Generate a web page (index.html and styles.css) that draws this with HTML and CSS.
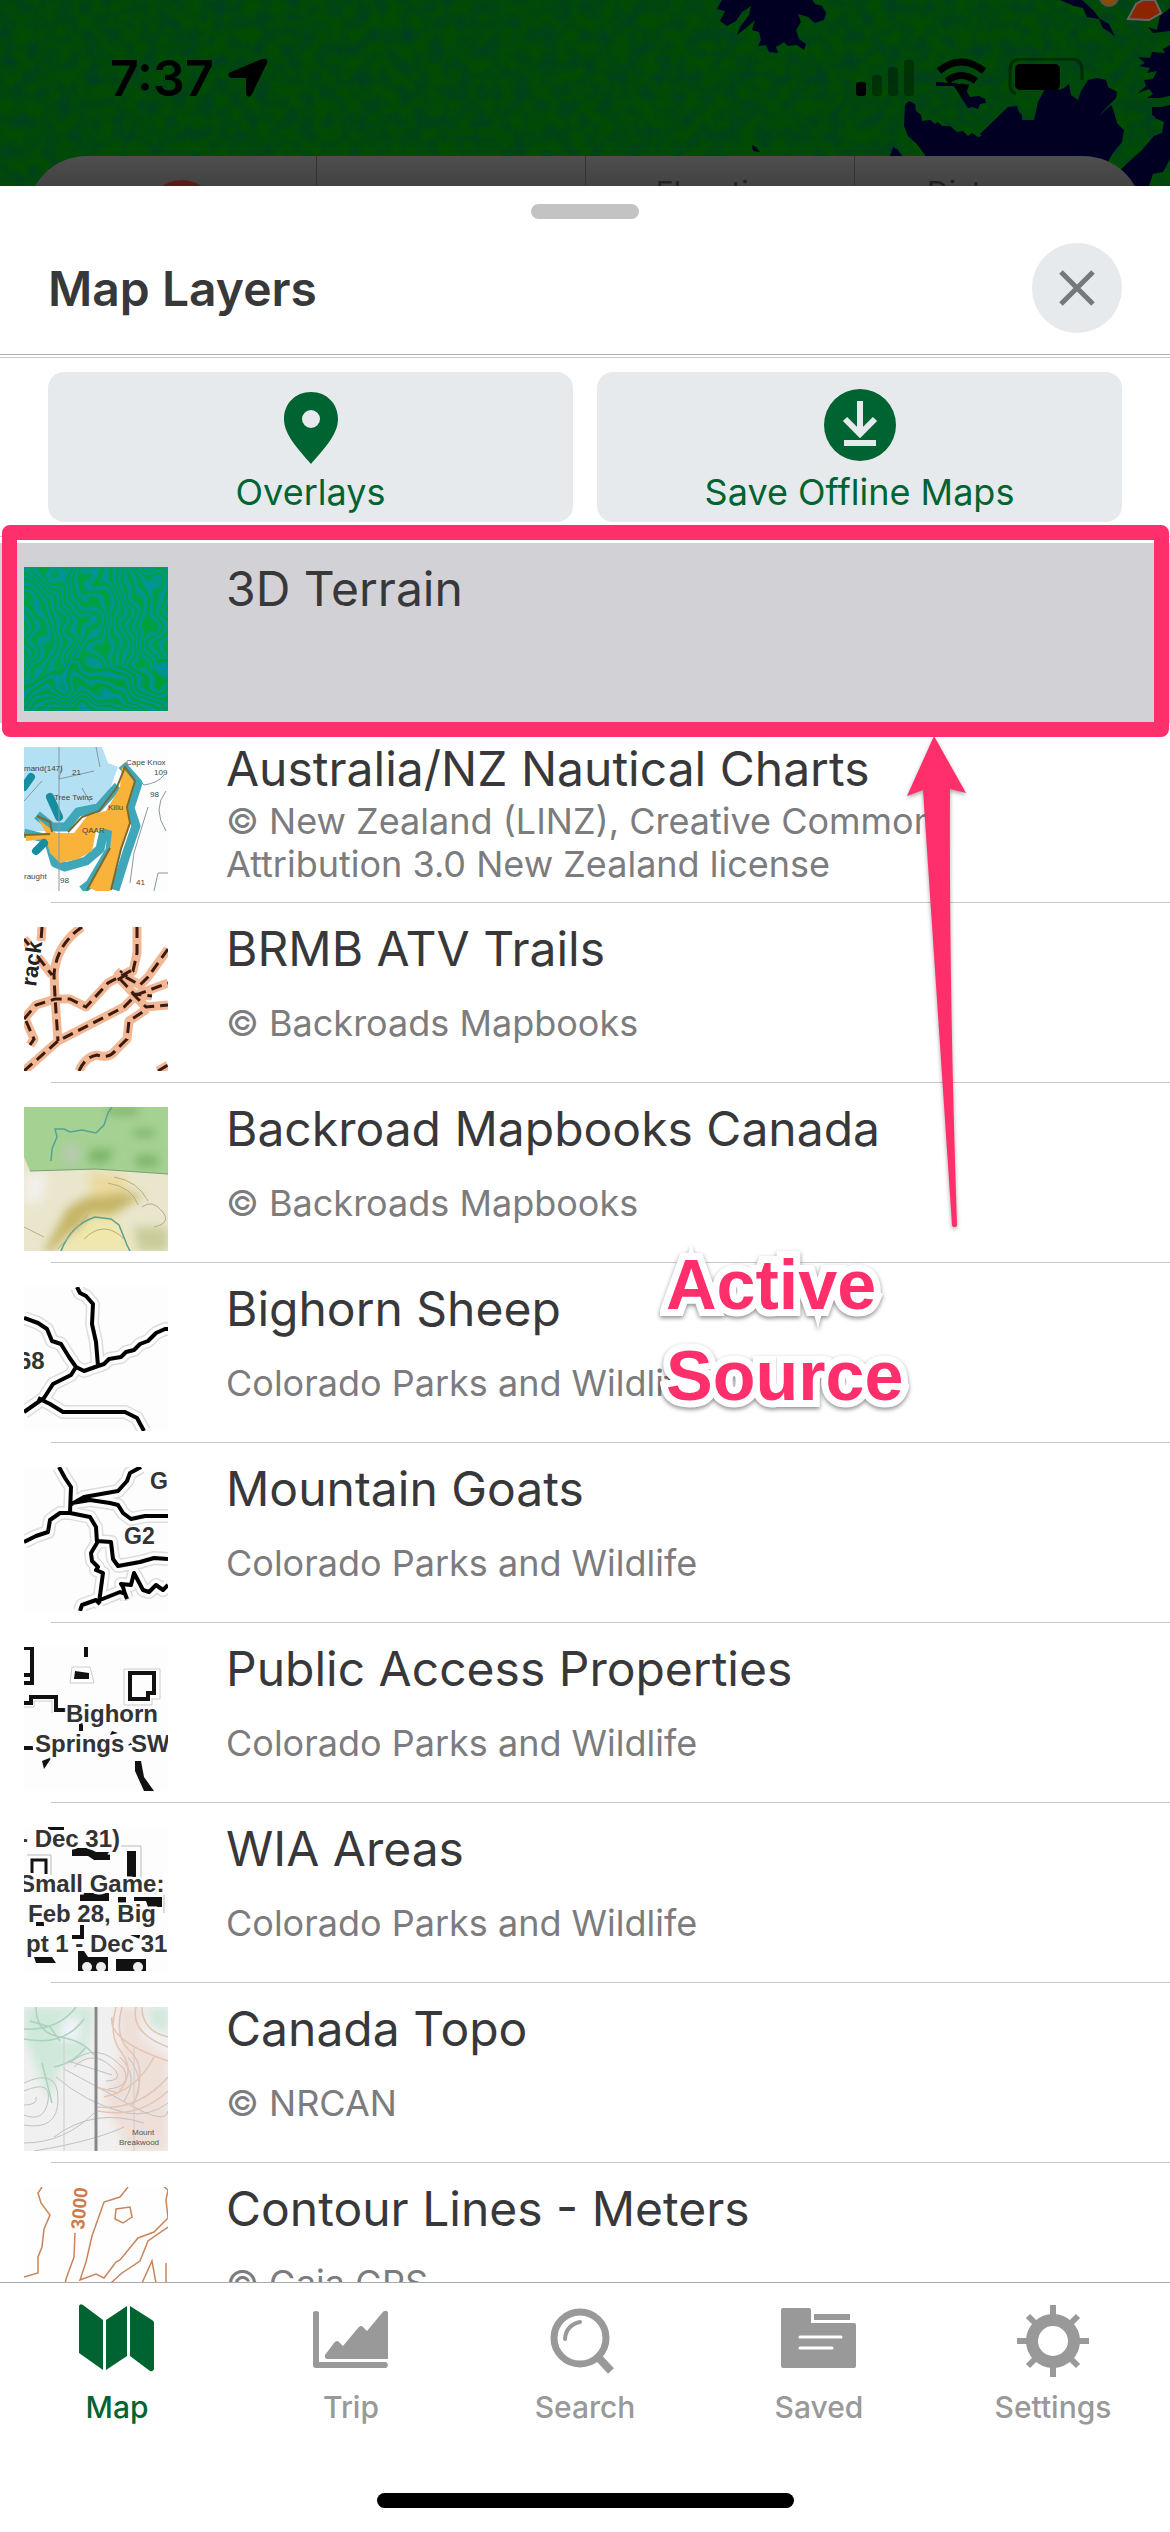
FILE: index.html
```html
<!DOCTYPE html>
<html lang="en">
<head>
    <meta charset="UTF-8">
    <meta name="viewport" content="width=device-width, initial-scale=1.0">
    <title>Map Layers</title>
    <link rel="stylesheet" href="styles.css">
</head>
<body>
    <div class="app">
        <div class="backdrop">
            <svg class="backdrop-map" viewBox="0 0 1170 186" preserveAspectRatio="xMaxYMin slice" aria-hidden="true">
                <filter id="grain" x="0" y="0" width="100%" height="100%" color-interpolation-filters="sRGB">
                    <feTurbulence type="fractalNoise" baseFrequency="0.07" numOctaves="3" seed="4"/>
                    <feColorMatrix values="0 0 0 0 0  0 0 0 0 0.24  0 0 0 0 0.14  0 1.6 0 0 -0.5"/>
                </filter>
                <rect width="1170" height="186" fill="#004c02"/>
                <rect width="1170" height="186" filter="url(#grain)"/>
                <g fill="#020022">
                    <path d="M722 0l-5 9 8 2-5 10 7 5 9-5 6-9 9-6-2 9-9 12-3 8 9-7 9-8-3 10 7 2 2 8-3 6 8-1 3 7 9 1-2-6 8-5 4 4 9-1 7 5 2-6-7-5-3-9 5-8-3-8 10 3 7 6 9-3 2-7-4-7-7-2-5-7 2-4-5-3z"/>
                    <path d="M1060 0l14 6 9 2 4 9 12 2 4 9 8 5 4 4-6-13-9-5-7-9-11-10z"/>
                    <path d="M1170 45l-7 4 2 4-13-1-2 6-12-1 7 6-6 3 11 2-3 5 10-2-4 8-9 1 2 6-8 7 11-4 4 5-6 4 12 0 11-2z"/>
                    <path d="M1170 8l-10 8-3 14-9-3 5 6 17-2zM1152 107l10 0 8-2v21l-9-7-9-4z"/>
                    <path d="M936 82l20 1 6 3 7-2-2 8 3 5 9-1 6 3 1 4-6 1-2 5-5-2-5 1-6-9-8-13-18 0z"/>
                    <path d="M905 105l4-4 6 3 1 7 5 4 1 6 8-1 5 4 3-2 4 4 8 0 7 6 6-1 5 5 4-3 6 4 7-2 8 4 8 1 13 0 11 2v6l10 4v13l-96 0-12-7-10-14-9-8-4-10z"/>
                    <path d="M1008 107l9-1 2 6 3 3 0 5 12 0 4-18 6-11 3-8 7 1 5 6 5-2 5-4 2 11 7 5 3-9 7-11 9-2 9 2 2 7 9 5-1 6-9 9-9 10 13-12 2 4 4 14 7 7-2 12-9 11-7 12-9 9-64 0 0-18-5-4h-15l-10-6-4 4-12-4-2-7-5-5z"/>
                    <path d="M1170 107l-17 4 2 7 9 4-2 11-8 3-12 14-9 8-17 16 7 12h26l4-12 10-2 7-13zM890 156l3-9 5 3 4 6zM752 145l4 2 4 5-7-1z"/>
                </g>
                <circle cx="1109" cy="-3" r="9" fill="#8a4a00" stroke="#555" stroke-width="2"/>
                <path d="M1128 19l8-15 7-4h12l6 13-12 7z" fill="#8a2500" stroke="#666" stroke-width="2"/>
            </svg>
            <div class="status-bar">
                <span class="time">7:37
                    <svg width="40" height="40" viewBox="0 0 40 40" aria-hidden="true"><path d="M37 1q3 0 2 4L24 36q-2 4-5 2-1-1-1-3V20H4q-5-1-3-5l2-1L34 1z"/></svg>
                </span>
                <svg class="status-icons" width="232" height="40" viewBox="0 0 232 40" aria-hidden="true">
                    <rect y="24" width="10" height="14" rx="3"/>
                    <g opacity=".3"><rect x="16" y="17" width="10" height="21" rx="3"/><rect x="32" y="9" width="10" height="29" rx="3"/><rect x="48" y="2" width="10" height="36" rx="3"/></g>
                    <g fill="none" stroke="#000" stroke-width="7"><path d="M83 13q22-18 45 0M91 23q14-11 29 0"/></g>
                    <path d="M98 28q8-5 15 0l-8 9z"/>
                    <path d="M160 36q-6-2-6-9V12q0-11 11-11h50q11 0 11 11v10" fill="none" stroke="#002d06" stroke-width="3"/>
                    <rect x="159" y="6" width="45" height="26" rx="5"/>
                </svg>
            </div>
            <div class="stats">
                <div class="stat"><span class="record"></span></div>
                <div class="stat"></div>
                <div class="stat">Elevation</div>
                <div class="stat">Distance</div>
            </div>
        </div>

        <main class="sheet">
            <header class="sheet-header">
                <div class="handle"></div>
                <div class="title-row">
                    <h1>Map Layers</h1>
                    <button class="close" type="button" aria-label="Close">
                        <svg width="36" height="36" viewBox="0 0 36 36"><path d="M2 2l32 32M34 2L2 34" stroke="#77787a" stroke-width="5"/></svg>
                    </button>
                </div>
            </header>

            <div class="sheet-body">
                <div class="actions">
                    <button class="action" type="button">
                        <svg width="72" height="72" viewBox="0 0 72 72"><path fill-rule="evenodd" d="M36 3C20 3 9 15 9 30c0 16 15 31 27 45 12-14 27-29 27-45C63 15 52 3 36 3zm0 18a9 9 0 1 1 0 18 9 9 0 0 1 0-18z"/></svg>
                        Overlays
                    </button>
                    <button class="action" type="button">
                        <svg width="72" height="72" viewBox="0 0 72 72"><circle cx="36" cy="36" r="36"/><path d="M36 12v32M21 30l15 15 15-15M20 54h32" fill="none" stroke="#e7eaec" stroke-width="6"/></svg>
                        Save Offline Maps
                    </button>
                </div>

                <ul class="layers">
                    <li class="layer selected">
                        <svg class="thumb" viewBox="0 0 144 144" aria-hidden="true">
                            <defs>
                                <radialGradient id="wave1" gradientUnits="userSpaceOnUse" cx="60" cy="190" r="8" spreadMethod="repeat">
                                    <stop offset="0" stop-color="#00a01c"/><stop offset=".5" stop-color="#008fb4"/><stop offset="1" stop-color="#00a01c"/>
                                </radialGradient>
                                <radialGradient id="wave2" gradientUnits="userSpaceOnUse" cx="-40" cy="70" r="8" spreadMethod="repeat">
                                    <stop offset="0" stop-color="#00a428"/><stop offset=".5" stop-color="#0092b0"/><stop offset="1" stop-color="#00a428"/>
                                </radialGradient>
                                <filter id="warp" x="0" y="0" width="100%" height="100%" color-interpolation-filters="sRGB">
                                    <feTurbulence type="fractalNoise" baseFrequency="0.03" numOctaves="2" seed="8" result="n"/>
                                    <feDisplacementMap in="SourceGraphic" in2="n" scale="50" xChannelSelector="R" yChannelSelector="G"/>
                                </filter>
                            </defs>
                            <rect width="144" height="144" fill="#009868"/>
                            <g filter="url(#warp)" opacity=".85">
                                <rect x="-40" y="-40" width="224" height="224" fill="url(#wave2)"/>
                                <path d="M-40 130Q60 85 184 100v90H-40z" fill="url(#wave1)"/>
                            </g>
                        </svg>
                        <div class="info"><h2>3D Terrain</h2></div>
                    </li>
                    <li class="layer">
                        <svg class="thumb" viewBox="0 0 144 144" aria-hidden="true">
                            <rect width="144" height="144" fill="#fdfdfe"/>
                            <path d="M0 0h78l6 16 10 4-8 22-24 24-38 18L0 84z" fill="#b3e0f2"/>
                            <g fill="none" stroke="#3fa7ba" stroke-width="9" stroke-linejoin="round">
                                <path d="M0 86l24 6 7 24 10 4 21-6 14-12 4-18 8 1-2 18-20 34-8 6M98 18l16 18-8 25 6 18-9 26-12 38M13 68l15 12 14 0 12-15 20-4 20-22"/>
                            </g>
                            <path d="M98 20l12 14-6 26 2 18-10 26-10 40H72l-8-4 22-38 2-18-6-2-10 2-4 20-14 8-18 4-10-10-4-14-20 2V88l20-2-8-14 18 14h18l14-18 18-4 14-24z" fill="#f9b23a"/>
                            <path d="M0 88l26-1M13 69l13 6 2 10M44 85l14-15 17-6 18-24 8-20 10 14-8 26 3 16-9 26-10 41M63 143l23-42" fill="none" stroke="#7a6a2e" stroke-width="2"/>
                            <path d="M26 50l9 20M7 30l-7 10M20 96l-8 8M3 50" stroke="#168e9f" stroke-width="8" stroke-linecap="round"/>
                            <path d="M35 0v144M72 0l4 20M38 18l-3 14 35-8M66 55l-8-14M112 30l8 8q14-2 20-10M142 44q-14 18 0 40M124 60l-8 26-6 20-4 30M130 144l4-18h10M0 54l18-20" fill="none" stroke="#8698a4" stroke-width="1"/>
                            <g font-family="Liberation Sans" font-size="8" fill="#444"><text x="102" y="18">Cape Knox</text><text x="30" y="53">Tree Twins</text><text x="58" y="86">QAAR</text><text x="84" y="63">Kiliu</text><text x="48" y="28">21</text><text x="0" y="24">mand(147)</text><text x="130" y="28">109</text><text x="126" y="50">98</text><text x="36" y="136">98</text><text x="0" y="132">raught</text><text x="112" y="138">41</text></g>
                        </svg>
                        <div class="info"><h2>Australia/NZ Nautical Charts</h2><p>© New Zealand (LINZ), Creative Common<br>Attribution 3.0 New Zealand license</p></div>
                    </li>
                    <li class="layer">
                        <svg class="thumb" viewBox="0 0 144 144" aria-hidden="true">
                            <rect width="144" height="144" fill="#fff"/>
                            <g fill="none" stroke="#f2b795" stroke-width="9" stroke-linejoin="round">
                                <path id="trails" d="M58 0Q32 18 30 48l1 22 3 44M18 0l-1 14M14 30l14 18M0 12l5 6M0 92l12-14 19-6 15 0 16 8 22-24 26-14M113 0v26l-4 18-14 8-1-4 4-4M144 22l-20 28-8 8-18-10M0 144l34-30 66-34 12-12 32-12M108 66l14 14 22-2M96 52l14 15 18 2M55 144q6-14 18-16 12 4 18-4l12-12 2-18 18-12M2 94l8 18-4 6M134 144l10-6"/>
                            </g>
                            <use href="#trails" fill="none" stroke="#3b1a10" stroke-width="3" stroke-dasharray="11 6"/>
                            <text transform="translate(12 60) rotate(-82)" font-family="Liberation Sans" font-size="22" font-weight="bold" fill="#222">rack</text>
                        </svg>
                        <div class="info"><h2>BRMB ATV Trails</h2><p>© Backroads Mapbooks</p></div>
                    </li>
                    <li class="layer">
                        <svg class="thumb" viewBox="0 0 144 144" aria-hidden="true">
                            <filter id="soft"><feGaussianBlur stdDeviation="5"/></filter>
                            <rect width="144" height="144" fill="#e9e6cd"/>
                            <g filter="url(#soft)">
                                <path d="M20 144l24-44 30-16 46 4-34 22-40 16-20 20z" fill="#c6b668"/>
                                <path d="M64 66l34 2 10 16-40 6z" fill="#ebda9e"/>
                                <path d="M36 144l30-36h24l20 36z" fill="#efe7ac"/>
                                <path d="M110 120h34v24h-30z" fill="#c9cc9a"/>
                                <path d="M0 66h24l-6 30H0z" fill="#f1f0ea"/>
                            </g>
                            <path d="M0 0h144v67L72 62 6 64 0 50z" fill="#a5d193"/>
                            <g filter="url(#soft)"><path d="M66 42h24l-6 14H64zM110 22h20v8h-20zM84 0h30v8H84zM112 48h22v12h-22z" fill="#7db56b"/><path d="M40 38h14v18H40z" fill="#b9c9b4"/></g>
                            <path d="M6 64l66-2 72 5" fill="none" stroke="#7f9c73"/>
                            <path d="M27 54l1-12 5-12-2-8 9 0 6 3 12-2 14 3 8-8 4-12 4-6M37 144q10-26 34-34l16 2 8 6 8 20 3 6" fill="none" stroke="#55a394" stroke-width="1.5"/>
                            <path d="M34 142l30-34M90 70q24 4 34 24M84 76q24 4 30 22M118 100q10-8 20 4t-8 16M100 132q-20-20-40 0M0 120l20 10" fill="none" stroke="#b7ae86" stroke-width="1"/>
                        </svg>
                        <div class="info"><h2>Backroad Mapbooks Canada</h2><p>© Backroads Mapbooks</p></div>
                    </li>
                    <li class="layer">
                        <svg class="thumb" viewBox="0 0 144 144" aria-hidden="true">
                            <rect width="144" height="144" fill="#fdfdfd"/>
                            <g fill="none" stroke-linejoin="round">
                                <path id="sheep" d="M0 31l14 5 9 6 5 12 9 3 8 13 7 10-5 8-18 9-9 14-20 14M53 0l3 6 6 3 7 8-1 20 4 18 2 24-14 5-8-4M74 79l6-2 5-5 12-2 5-5 8-2 6-6 8-3 8-8 9-4h9M14 111l12 6 13 8h62l12 6 7 13"/>
                                <use href="#sheep" stroke="#ddd" stroke-width="14"/>
                                <use href="#sheep" stroke="#fdfdfd" stroke-width="11"/>
                                <use href="#sheep" stroke="#000" stroke-width="4"/>
                            </g>
                            <text x="-6" y="82" font-family="Liberation Sans" font-size="24" font-weight="bold" fill="#333">68</text>
                        </svg>
                        <div class="info"><h2>Bighorn Sheep</h2><p>Colorado Parks and Wildlife</p></div>
                    </li>
                    <li class="layer">
                        <svg class="thumb" viewBox="0 0 144 144" aria-hidden="true">
                            <rect width="144" height="144" fill="#fdfdfd"/>
                            <g fill="none" stroke-linejoin="round">
                                <path id="goats" d="M35 0l6 11 6 9-1 26-10 0-10 7-2 12-12 4-12 6M46 38l14-8 34-6 9-10 3-8 11-6M48 36l18-3 20 3 8 2 5 8 8 6 14-3h23M46 46l20 4 6 10 1 16-6 10 1 8 6 6-2 3 7 3-4 30M73 74l14 1 2 17 5 7 22-4 14-4 14 1M76 133l20-8 5 2-2-7-2-3 10 1 3-12 9 17 6 2 7-7 7 5 5-5M56 144l2-6 14-5 4 4M103 132l-3-8"/>
                                <use href="#goats" stroke="#ddd" stroke-width="14"/>
                                <use href="#goats" stroke="#fdfdfd" stroke-width="11"/>
                                <use href="#goats" stroke="#000" stroke-width="4"/>
                            </g>
                            <g font-family="Liberation Sans" font-size="23" font-weight="bold" fill="#333"><text x="100" y="77">G2</text><text x="126" y="22">G</text></g>
                        </svg>
                        <div class="info"><h2>Mountain Goats</h2><p>Colorado Parks and Wildlife</p></div>
                    </li>
                    <li class="layer">
                        <svg class="thumb" viewBox="0 0 144 144" aria-hidden="true">
                            <rect width="144" height="144" fill="#fdfdfd"/>
                            <g fill="none" stroke="#111" stroke-width="4">
                                <path d="M0 1h8v35H0M0 28h8M0 56h7v-6h25v13h10M0 101h9M106 26h24v20h-6v6h-18zM62 0v10M57 76v8"/>
                            </g>
                            <path d="M51 24l14 2 0 6H50zM18 114l10-4-8 12zM88 84l6 2-8 2zM111 114l6 0 3 16 10 14h-10l-9-20zM104 98l5-4v8z" fill="#111"/>
                            <path d="M100 22h36v30h-8v6h-28zM48 20h18l4 16H46zM0 60h10v-6h18v12" fill="none" stroke="#ccc"/>
                            <g class="map-label"><text x="42" y="75">Bighorn</text><text x="11" y="105">Springs SW</text></g>
                        </svg>
                        <div class="info"><h2>Public Access Properties</h2><p>Colorado Parks and Wildlife</p></div>
                    </li>
                    <li class="layer">
                        <svg class="thumb" viewBox="0 0 144 144" aria-hidden="true">
                            <rect width="144" height="144" fill="#fdfdfd"/>
                            <path d="M24 0h16v3H24zM48 21h16l8 4h14v8H70l-6-4H48zM103 24h9v26h-9zM56 66h29v8H56zM94 70h8v6h-8zM110 70h28v10h-14l-2-6h-12zM12 95h8v4h-8zM48 108h8v-10h4v14H48zM10 130h18l4 6H12zM54 124h6l4 6h20v16H54zM92 132h30v14H92zM106 108h10v4z" fill="#111"/>
                            <path d="M8 46V33h14v14" fill="none" stroke="#111" stroke-width="3"/>
                            <circle cx="63" cy="140" r="5" fill="#eee"/><circle cx="77" cy="140" r="5" fill="#eee"/><circle cx="114" cy="140" r="5" fill="#eee"/>
                            <path d="M97 19h20v36h-8M44 17h8M3 28h24v20M88 66h52v20M44 114h-4v-8" fill="none" stroke="#bbb"/>
                            <g class="map-label"><text x="-4" y="20">- Dec 31)</text><text x="-5" y="65">Small Game:</text><text x="4" y="95">Feb 28, Big</text><text x="2" y="125">pt 1 - Dec 31</text></g>
                        </svg>
                        <div class="info"><h2>WIA Areas</h2><p>Colorado Parks and Wildlife</p></div>
                    </li>
                    <li class="layer">
                        <svg class="thumb" viewBox="0 0 144 144" aria-hidden="true">
                            <rect width="144" height="144" fill="#f1f0f0"/>
                            <g filter="url(#soft)">
                                <path d="M0 0h70l-4 30-6 20-24 8-10 36-14-34L0 30zM124 0h20v26l-16-6z" fill="#cfe8da"/>
                                <path d="M94 0h26l-4 30 28 20v94h-40l-24-50 16-44z" fill="#eedfd8"/>
                                <path d="M40 10h16v24H34z" fill="#f2f2fa"/>
                            </g>
                            <g fill="none" stroke="#a9d3bd" stroke-width="1.5"><path d="M0 22q34 2 52-22M0 32q40 8 60-20M12 0q0 26 24 30t34 18M30 60q20-4 32-20M6 14l20 6 10 14M18 56l10 40"/></g>
                            <g fill="none" stroke="#c3c0c1" stroke-width="1">
                                <path d="M0 108q20 8 24-14T0 84M0 118q34 6 34-26T0 76M0 98q14 0 12-8M40 62q30 16 66 36t38 6M44 54q38 12 44 14M32 70q30 26 70 36 24 4 42-10M50 60q20-20 42 4 6 10-10 10M46 56q28-24 54 6 8 18-16 20M30 130q40-30 90-14M0 136q40 0 70-30M10 144q60-10 90-24M96 50q20 20 4 44M104 50q20 26 4 48"/>
                            </g>
                            <g fill="none" stroke="#e3c4b5" stroke-width="1.5"><path d="M92 0q-8 30 6 46 14 20-4 40l-22-6M98 0q-8 30 8 44t6 46M112 0q-6 26 32 40M118 0q0 24 26 30M88 10q-4 24 56 44M130 50q-18 34-50 40M144 70q-30 34-70 30M144 84q-30 28-70 20"/></g>
                            <path d="M72 0v144" stroke="#888" stroke-width="3"/><path d="M110 40v104M40 30v114" stroke="#ccc"/>
                            <g font-family="Liberation Sans" font-size="8" fill="#555"><text x="108" y="128">Mount</text><text x="95" y="138">Breakwood</text></g>
                        </svg>
                        <div class="info"><h2>Canada Topo</h2><p>© NRCAN</p></div>
                    </li>
                    <li class="layer">
                        <svg class="thumb" viewBox="0 0 144 144" aria-hidden="true">
                            <rect width="144" height="144" fill="#fefefe"/>
                            <g fill="none" stroke="#c9845c" stroke-width="1.5">
                                <path d="M18 0l-4 6 3 10 9 12-6 14-2 18-4 10v16l-14 4M51 46l-1 24-8 22-10 52M104 0l-8 10-16 5-12 34-6 26-6 18 16-6 8 4 12-16 4-2 18-22 16-6 14-14-2-18 2-10-6-5M92 22l14-2 2 10-9 6-8-4zM144 40l-20 14-8 20-18 12-20 18M118 96l10-22 4 22M142 76v20"/>
                            </g>
                            <text transform="translate(60 43) rotate(-85)" font-family="Liberation Sans" font-size="19" font-weight="bold" fill="#cf7a4c">3000</text>
                        </svg>
                        <div class="info"><h2>Contour Lines - Meters</h2><p>© Gaia GPS</p></div>
                    </li>
                </ul>

                <div class="highlight"></div>
                <svg class="pointer" width="60" height="492" viewBox="0 0 60 492" aria-hidden="true"><path d="M27 0l32 57-16-4q-1 200 7 436 0 2-2 2-3 0-3-2L16 54 0 60z" fill="#ff2f6c"/></svg>
                <p class="note">Active<br>Source</p>
            </div>
        </main>

        <nav class="tab-bar">
            <div class="tabs">
                <a class="tab active" href="#map">
                    <svg width="76" height="76" viewBox="0 0 76 76"><path d="M0 6q1-3 4-1l20 15v50L0 53zM27 20L48 6v50L27 70zM51 6l22 14q2 1 2 3v46q-1 3-4 2L51 56z"/></svg>
                    Map
                </a>
                <a class="tab" href="#trip">
                    <svg width="76" height="76" viewBox="0 0 76 76"><path d="M0 12q3-2 6 0v50h67q4 3 0 6H3q-3 0-3-3zM12 55l9-12q3-4 6 0l3 3 15-18q3-4 6 0l3 3 15-18q3-4 6-1v47H15q-4 0-3-4z"/></svg>
                    Trip
                </a>
                <a class="tab" href="#search">
                    <svg width="76" height="76" viewBox="0 0 76 76"><g fill="none" stroke="#999" stroke-width="7"><circle cx="33" cy="38" r="26"/><path d="M50 56l14 15" stroke-width="8"/><path d="M18 39q1-14 15-17" stroke-width="4" stroke-linecap="round"/></g></svg>
                    Search
                </a>
                <a class="tab" href="#saved">
                    <svg width="76" height="76" viewBox="0 0 76 76"><path d="M2 8h26q2 0 2 2v13h43q2 0 2 2v41q0 2-2 2H2q-2 0-2-2V10q0-2 2-2zM33 14h36v6H33z"/><path d="M19 37h41M19 48h32" stroke="#fff" stroke-width="3" stroke-linecap="round"/></svg>
                    Saved
                </a>
                <a class="tab" href="#settings">
                    <svg width="76" height="76" viewBox="0 0 76 76"><g fill="none" stroke="#999"><circle cx="38" cy="41" r="21" stroke-width="12"/><path d="M38 5v12M38 65v12M2 41h12M62 41h12M13 16l8 8M55 58l8 8M63 16l-8 8M21 58l-8 8" stroke-width="6"/></g></svg>
                    Settings
                </a>
            </div>
            <div class="home-indicator"></div>
        </nav>
    </div>
</body>
</html>
```
FILE: styles.css
```css
:root {
    --green: #006432;
    --text: #38383a;
    --muted: #7c7c7e;
    --grey-icon: #999;
    --button-bg: #e7eaec;
    --line: #c8c8ca;
    --pink: #ff2f6c;
}

* {
    box-sizing: border-box;
}

body, h1, h2, p, ul {
    margin: 0;
    padding: 0;
}

body {
    font-family: Inter, "Liberation Sans", sans-serif;
    color: var(--text);
    background-color: #fff;
}

button {
    border: none;
    font: inherit;
    cursor: pointer;
}

.app {
    display: flex;
    flex-direction: column;
    height: 100vh;
    overflow: hidden;
}

/* dimmed map behind the sheet */
.backdrop {
    position: relative;
    flex: none;
    display: flex;
    flex-direction: column;
    height: 186px;
    overflow: hidden;
    background-color: #004a03;
}

.backdrop-map {
    position: absolute;
    top: 0;
    left: 0;
    width: 100%;
    height: 100%;
}

.status-bar {
    position: relative;
    flex: none;
    display: flex;
    justify-content: space-between;
    align-items: flex-start;
    height: 156px;
    padding: 58px 82px 0 110px;
}

.time {
    display: flex;
    gap: 14px;
    font-size: 50px;
    line-height: 40px;
    font-weight: 600;
    color: #000;
}

.stats {
    position: relative;
    display: grid;
    grid-template-columns: repeat(4, 1fr);
    flex: none;
    height: 120px;
    margin: 0 27px;
    padding: 0 20px;
    border-radius: 60px;
    background: linear-gradient(#4e4e4e, #424242 30px);
}

.stat {
    padding-top: 18px;
    text-align: center;
    font-size: 30px;
    line-height: 36px;
    color: #222;
}

.stat + .stat {
    border-left: 1px solid #333;
}

.record {
    display: block;
    width: 68px;
    height: 68px;
    margin: 6px auto 0;
    border-radius: 50%;
    background-color: #5c1a17;
}

.sheet {
    flex: 1;
    display: flex;
    flex-direction: column;
    min-height: 0;
    background-color: #fff;
}

.sheet-header {
    padding: 18px 48px 21px;
    border-bottom: 1px solid #b0b0b2;
}

.handle {
    width: 108px;
    height: 15px;
    margin: 0 auto 24px;
    border-radius: 8px;
    background-color: #c1c4c0;
}

.title-row {
    display: flex;
    justify-content: space-between;
    align-items: center;
}

h1 {
    font-size: 48px;
    font-weight: 600;
}

.close {
    display: flex;
    align-items: center;
    justify-content: center;
    width: 90px;
    height: 90px;
    padding: 0;
    border-radius: 50%;
    background-color: var(--button-bg);
}

.sheet-body {
    position: relative;
    flex: 1;
    min-height: 0;
    margin-top: 2px;
    overflow: hidden;
    border-top: 1px solid var(--line);
}

.actions {
    display: grid;
    grid-template-columns: 1fr 1fr;
    gap: 24px;
    padding: 14px 48px;
    border-bottom: 1px solid var(--line);
}

.action {
    display: flex;
    flex-direction: column;
    align-items: center;
    gap: 9px;
    padding: 17px 0 8px;
    border-radius: 16px;
    background-color: var(--button-bg);
    color: var(--green);
    font-size: 36px;
    line-height: 44px;
}

.action svg {
    fill: var(--green);
    overflow: visible;
}

.layers {
    padding-top: 6px;
    list-style: none;
}

.layer {
    position: relative;
    display: flex;
    gap: 58px;
    height: 180px;
    padding: 18px 24px 14px;
}

/* inset separator */
.layer::after {
    content: "";
    position: absolute;
    left: 51px;
    right: 0;
    bottom: 0;
    height: 1px;
    background-color: var(--line);
}

.selected {
    background-color: #d1d1d6;
}

.thumb {
    flex: none;
    width: 144px;
    height: 144px;
    margin-top: 6px;
}

.map-label {
    font: bold 24px "Liberation Sans", sans-serif;
    fill: #333;
    stroke: #fdfdfd;
    stroke-width: 5px;
    paint-order: stroke;
}

.info {
    flex: 1;
    display: flex;
    flex-direction: column;
    min-width: 0;
}

h2 {
    font-size: 48px;
    line-height: 56px;
    font-weight: 400;
}

.info p {
    margin: auto 0;
    font-size: 36px;
    line-height: 43px;
    color: var(--muted);
}

/* callout drawn over the list */
.highlight {
    position: absolute;
    top: 167px;
    left: 2px;
    right: 1px;
    height: 212px;
    border: 15px solid var(--pink);
    border-radius: 8px;
}

.pointer {
    position: absolute;
    top: 378px;
    left: 907px;
    filter: drop-shadow(0 2px 2px rgba(0, 0, 0, 0.35));
}

.note {
    position: absolute;
    top: 882px;
    left: 666px;
    font: bold 70px/91px "Liberation Sans", sans-serif;
    color: var(--pink);
    -webkit-text-stroke: 14px #fff;
    paint-order: stroke fill;
    stroke-linejoin: round;
    filter: drop-shadow(0 2px 2px rgba(0, 0, 0, 0.45));
}

.tab-bar {
    flex: none;
    padding: 17px 0 24px;
    border-top: 1px solid #aaa;
    background-color: #fff;
}

.tabs {
    display: grid;
    grid-template-columns: repeat(5, 1fr);
}

.tab {
    display: flex;
    flex-direction: column;
    align-items: center;
    gap: 13px;
    font-size: 30px;
    line-height: 36px;
    font-weight: 500;
    color: var(--grey-icon);
    text-decoration: none;
}

.tab svg {
    fill: currentColor;
    overflow: visible;
}

.active {
    color: var(--green);
}

.home-indicator {
    width: 417px;
    height: 15px;
    margin: 68px auto 0;
    border-radius: 8px;
    background-color: #000;
}
```
